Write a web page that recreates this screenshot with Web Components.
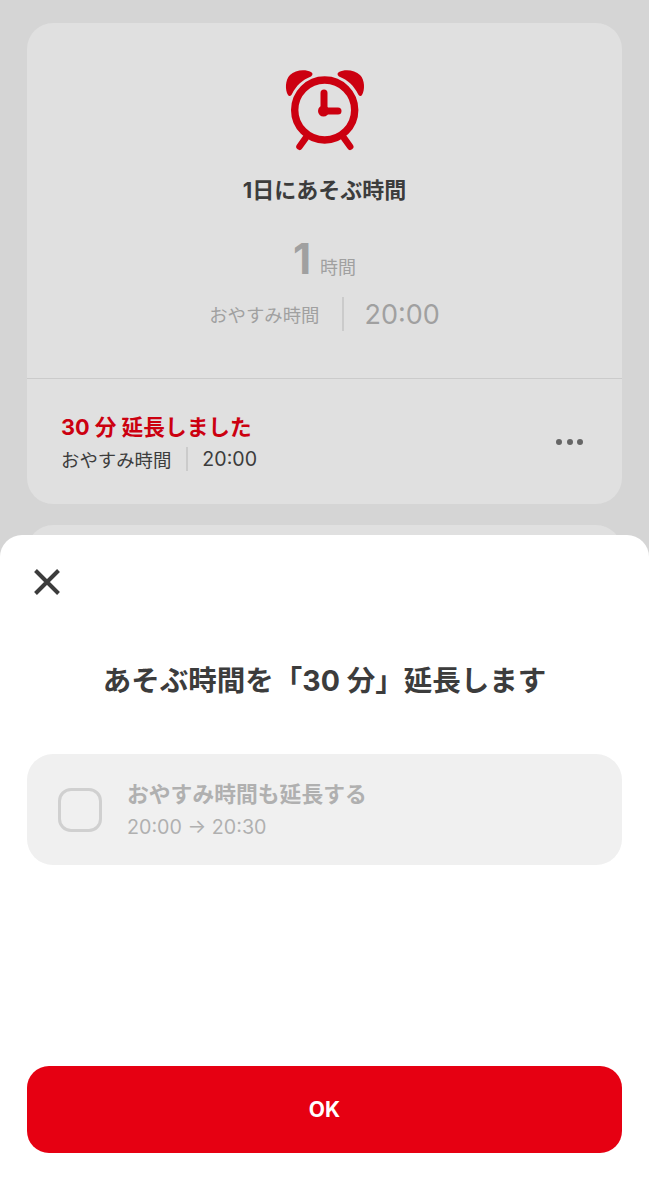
<!DOCTYPE html>
<html lang="ja">
<head>
<meta charset="utf-8">
<title>あそぶ時間</title>
<style>
html, body { margin: 0; padding: 0; }
body {
    width: 649px;
    height: 1200px;
    overflow: hidden;
    background: #d5d5d5;
    font-family: Inter, "Noto Sans CJK JP", sans-serif;
}
</style>
</head>
<body>
<play-screen>
    <play-card>
        <span slot="title">1日にあそぶ時間</span>
        <span slot="hours">1</span>
        <span slot="bedtime">20:00</span>
        <extend-note slot="note"></extend-note>
    </play-card>
</play-screen>
<extend-sheet>
    <span slot="title">あそぶ時間を「30 分」延長します</span>
    <bedtime-option>
        <span slot="label">おやすみ時間も延長する</span>
        <span slot="detail">20:00 → 20:30</span>
    </bedtime-option>
</extend-sheet>

<script>
const screenTemplate = document.createElement('template');
screenTemplate.innerHTML = `
    <style>
        :host {
            display: flex;
            flex-direction: column;
            gap: 21px;
            padding: 23px 27px 0;
            height: 1177px;
            overflow: hidden;
        }
        .next-card {
            height: 300px;
            background: #e0e0e0;
            border-radius: 26px;
        }
    </style>
    <slot></slot>
    <div class="next-card"></div>
`;
class PlayScreen extends HTMLElement {
    connectedCallback() {
        const shadowRoot = this.attachShadow({mode: 'open'});
        shadowRoot.appendChild(screenTemplate.content.cloneNode(true));
    }
}

const cardTemplate = document.createElement('template');
cardTemplate.innerHTML = `
    <style>
        :host {
            display: block;
            background: #e0e0e0;
            border-radius: 26px;
            color: #a0a0a0;
        }
        .top {
            display: flex;
            flex-direction: column;
            align-items: center;
            height: 356px;
            box-sizing: border-box;
            padding-top: 45px;
            border-bottom: 1px solid #cbcbcb;
        }
        svg { display: block; width: 80px; height: 84px; }
        h2 {
            margin: 22px 0 0;
            height: 32px;
            font-size: 22px;
            line-height: 32px;
            font-weight: 700;
            color: #3c3c3c;
        }
        .hours {
            display: flex;
            align-items: baseline;
            gap: 9px;
            height: 60px;
            margin-top: 23px;
            line-height: 60px;
        }
        .hours b { font-size: 42px; font-weight: 700; }
        .hours span { font-size: 18px; }
        .bedtime {
            display: flex;
            align-items: center;
            height: 34px;
            margin-top: 8px;
            font-size: 18.4px;
        }
        .bedtime i {
            width: 2px;
            height: 34px;
            margin: 0 21px 0 22px;
            background: #cbcbcb;
        }
        .bedtime span { font-size: 27px; }
    </style>
    <div class="top">
        <svg viewBox="0 0 80 84" fill="#cc0010">
            <path d="M3 27C0 22 0 12 5 7C10 2 20 1 26 4C28 5 28 7 26 8.5C17 12 11 18 7 26C5.500 28.500 4 28.500 3 27Z"/>
            <path d="M77 27C80 22 80 12 75 7C70 2 60 1 54 4C52 5 52 7 54 8.500C63 12 69 18 73 26C74.500 28.500 76 28.500 77 27Z"/>
            <circle cx="39.700" cy="42" r="30" fill="none" stroke="#cc0010" stroke-width="7.400"/>
            <path d="M20.700 70L14.500 78.700M59 70L65.200 78.700" fill="none" stroke="#cc0010" stroke-width="6.500" stroke-linecap="round"/>
            <path d="M39 25V43H53" fill="none" stroke="#cc0010" stroke-width="7" stroke-linecap="round" stroke-linejoin="round"/>
            <circle cx="38.500" cy="43" r="5.500"/>
        </svg>
        <h2><slot name="title"></slot></h2>
        <div class="hours"><b><slot name="hours"></slot></b><span>時間</span></div>
        <div class="bedtime">おやすみ時間<i></i><span><slot name="bedtime"></slot></span></div>
    </div>
    <slot name="note"></slot>
`;
class PlayCard extends HTMLElement {
    connectedCallback() {
        const shadowRoot = this.attachShadow({mode: 'open'});
        shadowRoot.appendChild(cardTemplate.content.cloneNode(true));
    }
}

const noteTemplate = document.createElement('template');
noteTemplate.innerHTML = `
    <style>
        :host {
            display: flex;
            align-items: center;
            justify-content: space-between;
            height: 125px;
            box-sizing: border-box;
            padding: 0 39px 0 34px;
            color: #3c3c3c;
        }
        .title {
            font-size: 21.7px;
            line-height: 30px;
            font-weight: 700;
            color: #cc0010;
        }
        .sub {
            display: flex;
            align-items: center;
            height: 24px;
            margin-top: 5px;
            font-size: 18.4px;
        }
        .sub i {
            width: 2px;
            height: 24px;
            margin: 0 14px 0 15px;
            background: #cbcbcb;
        }
        .sub span { font-size: 19.6px; }
        .more { display: flex; gap: 4.500px; }
        .more i {
            width: 6px;
            height: 6px;
            border-radius: 50%;
            background: #666;
        }
    </style>
    <div>
        <div class="title">30 分 延長しました</div>
        <div class="sub">おやすみ時間<i></i><span>20:00</span></div>
    </div>
    <div class="more"><i></i><i></i><i></i></div>
`;
class ExtendNote extends HTMLElement {
    connectedCallback() {
        const shadowRoot = this.attachShadow({mode: 'open'});
        shadowRoot.appendChild(noteTemplate.content.cloneNode(true));
    }
}

const sheetTemplate = document.createElement('template');
sheetTemplate.innerHTML = `
    <style>
        :host {
            position: absolute;
            left: 0;
            right: 0;
            top: 535px;
            bottom: 0;
            display: flex;
            flex-direction: column;
            box-sizing: border-box;
            padding: 33px 27px 47px;
            background: #fff;
            border-radius: 22px 22px 0 0;
            color: #3c3c3c;
        }
        .close { display: block; width: 28px; height: 28px; margin-left: 6px; }
        h1 {
            margin: 63px 0 0;
            height: 44px;
            font-size: 28.500px;
            line-height: 44px;
            font-weight: 700;
            text-align: center;
            white-space: nowrap;
        }
        ::slotted(bedtime-option) { margin-top: 51px; }
        button {
            margin-top: auto;
            height: 87px;
            border: 0;
            border-radius: 22px;
            background: #e60012;
            color: #fff;
            font: 700 21px Inter, "Noto Sans CJK JP", sans-serif;
        }
    </style>
    <svg class="close" viewBox="0 0 28 28">
        <path d="M2.500 2.500L25.500 25.500M25.500 2.500L2.500 25.500" fill="none" stroke="#3c3c3c" stroke-width="4"/>
    </svg>
    <h1><slot name="title"></slot></h1>
    <slot></slot>
    <button>OK</button>
`;
class ExtendSheet extends HTMLElement {
    connectedCallback() {
        const shadowRoot = this.attachShadow({mode: 'open'});
        shadowRoot.appendChild(sheetTemplate.content.cloneNode(true));
    }
}

const optionTemplate = document.createElement('template');
optionTemplate.innerHTML = `
    <style>
        :host {
            display: flex;
            align-items: center;
            gap: 25px;
            height: 111px;
            box-sizing: border-box;
            padding: 0 31px;
            background: #f0f0f0;
            border-radius: 26px;
            color: #b0b0b0;
        }
        .box {
            width: 44px;
            height: 44px;
            box-sizing: border-box;
            border: 3.500px solid #d0d0d0;
            border-radius: 13px;
        }
        .label { font-size: 21.800px; line-height: 32px; font-weight: 700; }
        .detail { margin-top: 2px; font-size: 19.700px; line-height: 30px; }
    </style>
    <div class="box"></div>
    <div>
        <div class="label"><slot name="label"></slot></div>
        <div class="detail"><slot name="detail"></slot></div>
    </div>
`;
class BedtimeOption extends HTMLElement {
    connectedCallback() {
        const shadowRoot = this.attachShadow({mode: 'open'});
        shadowRoot.appendChild(optionTemplate.content.cloneNode(true));
    }
}

customElements.define('extend-note', ExtendNote);
customElements.define('play-card', PlayCard);
customElements.define('play-screen', PlayScreen);
customElements.define('bedtime-option', BedtimeOption);
customElements.define('extend-sheet', ExtendSheet);
</script>
</body>
</html>
